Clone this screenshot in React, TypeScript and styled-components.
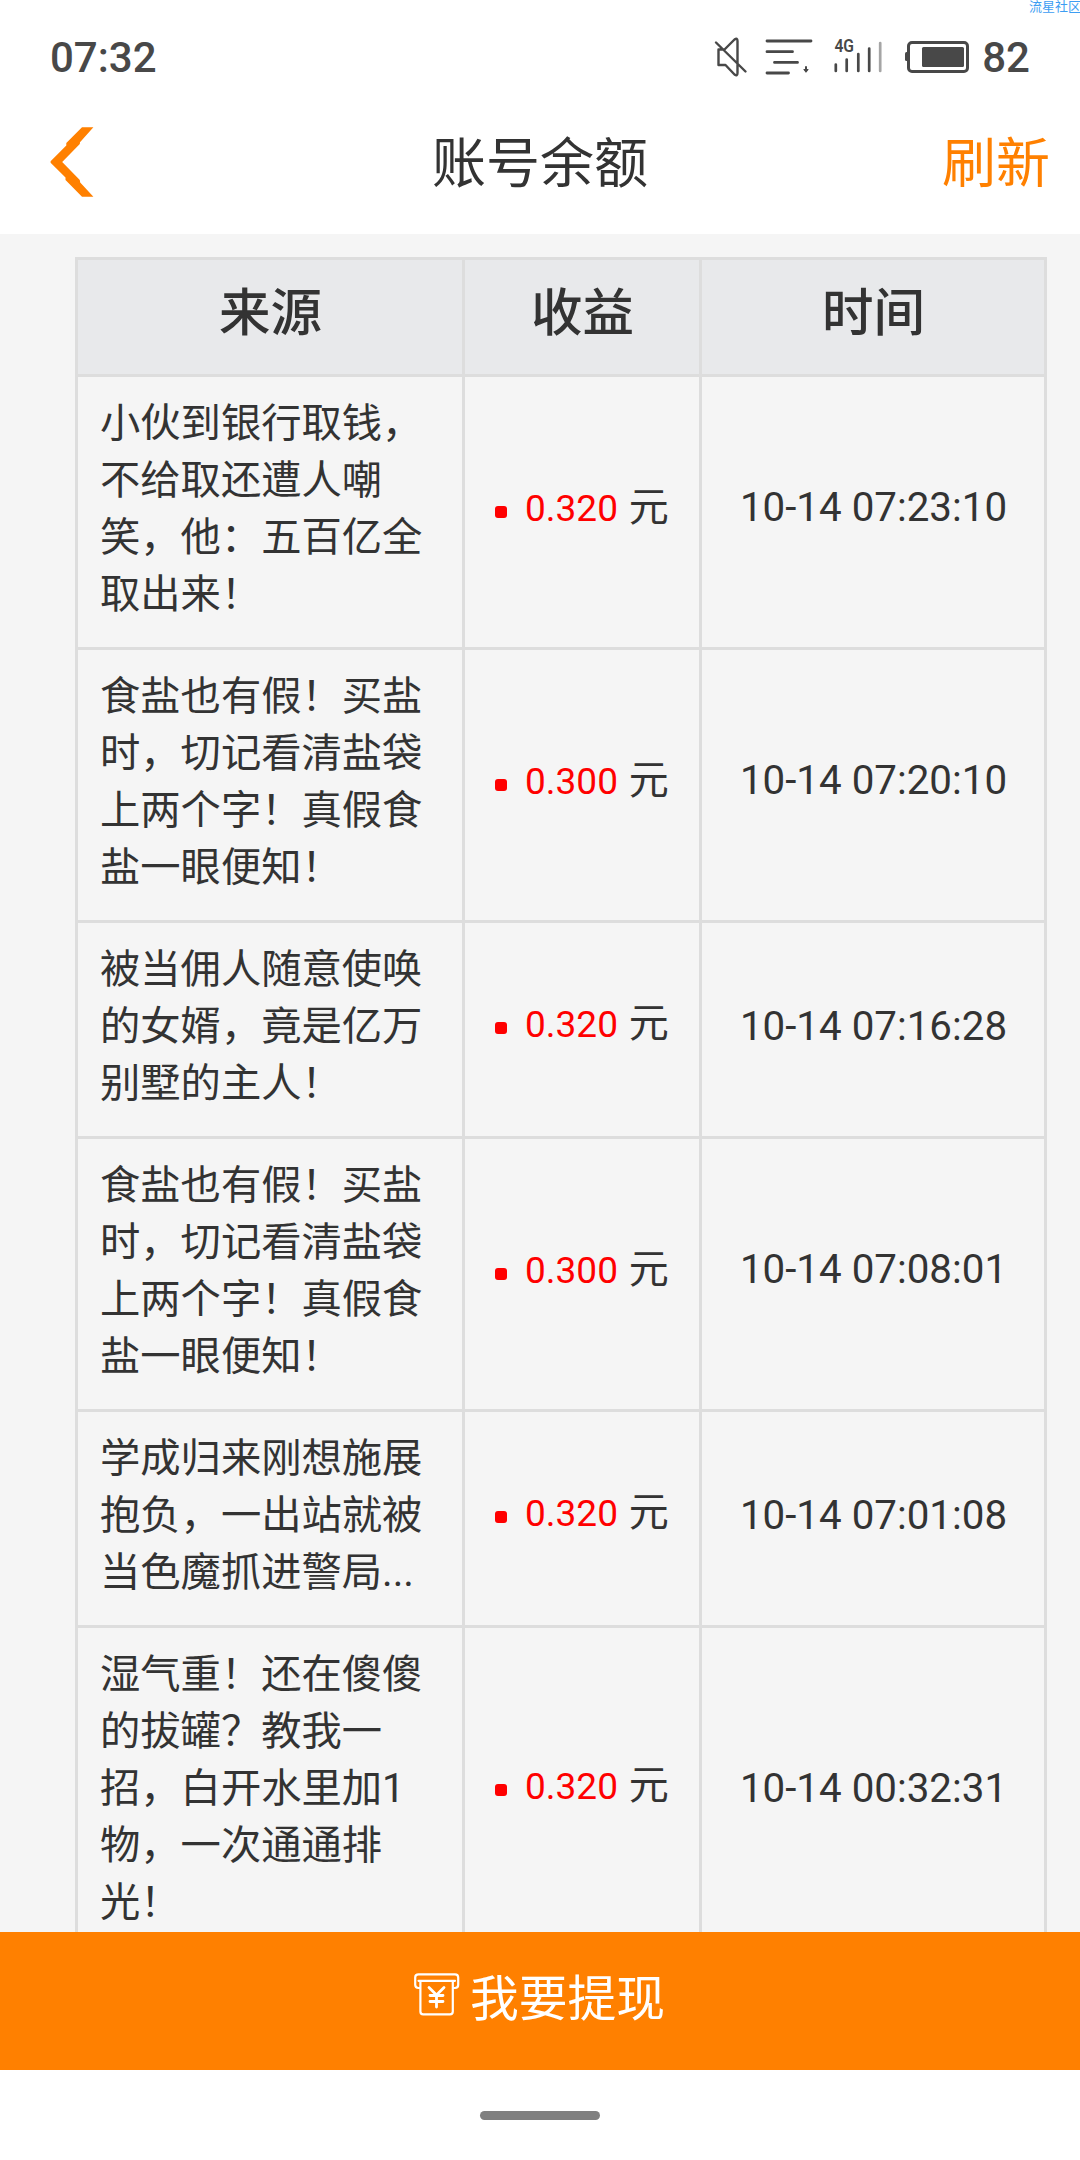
import React from "react";
import styled, { createGlobalStyle } from "styled-components";

const GlobalStyle = createGlobalStyle`
  * { box-sizing: border-box; }
  body {
    margin: 0;
    background: #ffffff;
    font-family: Roboto, "Noto Sans CJK SC", sans-serif;
    color: #333333;
  }
`;

const LINE = "#dddddd";
const ORANGE = "#ff8000";
const INK = "#484848";

const Screen = styled.div`
  position: relative;
  width: 1080px;
  height: 2160px;
  display: flex;
  flex-direction: column;
  overflow: hidden;
  background: #ffffff;
`;

const Watermark = styled.div`
  position: absolute;
  top: 0;
  right: -1px;
  font-size: 13px;
  line-height: 13px;
  color: #3d9df2;
`;

const StatusBar = styled.div`
  height: 108px;
  flex: none;
  display: flex;
  align-items: center;
  justify-content: space-between;
  padding: 6px 50px 0 50px;
  color: ${INK};
`;

const StatusText = styled.span`
  padding-top: 2px;
  font-size: 42px;
  font-weight: 500;
  line-height: 50px;
`;

const StatusGroup = styled.div`
  display: flex;
  align-items: center;
`;

const StatusIcons = styled.svg`
  display: block;
  margin-right: 12px;
`;

const NavBar = styled.header`
  height: 126px;
  flex: none;
  display: grid;
  grid-template-columns: 1fr auto 1fr;
  align-items: center;
  padding: 0 30px 18px 50px;
`;

const BackIcon = styled.svg`
  display: block;
`;

const Title = styled.h1`
  margin: 0;
  padding: 5px 20px 0 0;
  font-size: 54px;
  font-weight: 400;
  line-height: 72px;
`;

const Refresh = styled.button`
  justify-self: end;
  padding: 5px 0 0;
  border: 0;
  background: none;
  font: inherit;
  font-size: 54px;
  line-height: 72px;
  color: ${ORANGE};
`;

const Content = styled.main`
  flex: 1;
  min-height: 0;
  overflow: hidden;
  padding: 23px 33px 0 75px;
  background: #f5f5f5;
`;

const Table = styled.div`
  border: 3px solid ${LINE};
  border-bottom: 0;
`;

const Row = styled.div`
  display: grid;
  grid-template-columns: 387px 237px 342px;
  border-bottom: 3px solid ${LINE};
`;

const HeadRow = styled(Row)`
  background: #e8e9eb;
`;

const Cell = styled.div`
  display: flex;
  align-items: center;
  justify-content: center;
  border-right: 3px solid ${LINE};
  &:last-child { border-right: 0; }
`;

const HeadCell = styled(Cell)`
  height: 114px;
  padding: 0 0 6px 1px;
  font-size: 51.5px;
  font-weight: 500;
  line-height: 72px;
`;

const SourceCell = styled(Cell)`
  justify-content: flex-start;
  padding: 18px 21px 24px 22px;
  font-size: 40.3px;
  line-height: 57px;
  white-space: pre;
`;

const IncomeCell = styled(Cell)`
  justify-content: flex-start;
  padding-left: 30px;
`;

const Dot = styled.i<{ $odd: boolean }>`
  width: 12px;
  height: 12px;
  margin-right: 18px;
  margin-bottom: ${(p) => (p.$odd ? 3 : 0)}px;
  border-radius: 3px;
  background: #ff0000;
`;

const Income = styled.span<{ $odd: boolean }>`
  padding-bottom: ${(p) => (p.$odd ? 11 : 8)}px;
  font-size: 40px;
  line-height: 57px;
  white-space: pre;
`;

const Amount = styled.b`
  margin-right: 1px;
  font-size: 37px;
  font-weight: 400;
  color: #ff0000;
`;

const TimeCell = styled(Cell)<{ $odd: boolean }>`
  padding-left: 1px;
  padding-bottom: ${(p) => (p.$odd ? 7 : 9)}px;
  font-size: 40.3px;
  line-height: 57px;
`;

const Withdraw = styled.button`
  height: 138px;
  flex: none;
  display: flex;
  align-items: center;
  justify-content: center;
  gap: 10px;
  padding: 0 1px 2px 0;
  border: 0;
  background: ${ORANGE};
  color: #ffffff;
  font: inherit;
  font-size: 48.8px;
  line-height: 72px;
`;

const WithdrawGlyph = styled.svg`
  display: block;
  margin-bottom: 11px;
`;

const GestureBar = styled.div`
  height: 90px;
  flex: none;
  display: flex;
  justify-content: center;
  padding-top: 41px;
`;

const Handle = styled.div`
  width: 120px;
  height: 9px;
  border-radius: 5px;
  background: #808080;
`;

type Entry = { source: string; amount: string; time: string };

const entries: Entry[] = [
  { source: "小伙到银行取钱，\n不给取还遭人嘲\n笑，他：五百亿全\n取出来！", amount: "0.320", time: "10-14 07:23:10" },
  { source: "食盐也有假！买盐\n时，切记看清盐袋\n上两个字！真假食\n盐一眼便知！", amount: "0.300", time: "10-14 07:20:10" },
  { source: "被当佣人随意使唤\n的女婿，竟是亿万\n别墅的主人！", amount: "0.320", time: "10-14 07:16:28" },
  { source: "食盐也有假！买盐\n时，切记看清盐袋\n上两个字！真假食\n盐一眼便知！", amount: "0.300", time: "10-14 07:08:01" },
  { source: "学成归来刚想施展\n抱负，一出站就被\n当色魔抓进警局...", amount: "0.320", time: "10-14 07:01:08" },
  { source: "湿气重！还在傻傻\n的拔罐？教我一\n招，白开水里加1\n物，一次通通排\n光！", amount: "0.320", time: "10-14 00:32:31" },
];

const NetworkLabel = styled.text`
  font-family: Roboto, sans-serif;
  font-size: 17px;
  font-weight: 600;
`;

function SystemIcons() {
  return (
    <StatusIcons width="258" height="42" viewBox="712 36 258 42" fill="none" stroke={INK} strokeLinecap="round" strokeLinejoin="round">
      <path d="M724.5 49.5H718.5V65H725.5L734.5 74.5Q737.5 76.5 737.5 73V41Q737.5 37.5 734.5 39.5L724.5 49.5M716 42.5L745.5 71.5" strokeWidth="2.4" />
      <path d="M767 41H811M767 51.7H792.5M774.5 62.4H797.5M767 73H788.5" strokeWidth="2.8" />
      <path d="M806 67V70" strokeWidth="2" />
      <path d="M804 69.5H808L806 72Z" fill={INK} strokeWidth="1.2" />
      <path d="M835.8 64.5V71M846.7 59.5V71M858.3 54V71M869.2 48.5V71" strokeWidth="2.7" />
      <path d="M880.2 43V71" stroke="#a5a5a5" strokeWidth="2.7" />
      <NetworkLabel transform="translate(834.4 52.4) scale(0.92 1.04)" fill={INK} stroke="none">4G</NetworkLabel>
      <rect x="908.5" y="42.5" width="59" height="29" rx="3.5" strokeWidth="3" />
      <rect x="922" y="47" width="42" height="20" rx="1.5" fill={INK} stroke="none" />
      <path d="M908 52H906.5Q905 52 905 53.5V59.5Q905 61 906.5 61H908Z" fill={INK} stroke="none" />
    </StatusIcons>
  );
}

function WithdrawIcon() {
  return (
    <WithdrawGlyph width="46" height="43" viewBox="0 0 46 43" fill="none" stroke="#fff" strokeWidth="2.2" strokeLinecap="round" strokeLinejoin="round">
      <path d="M6 15H4.5Q1.2 15 1.2 11.8V4.5Q1.2 1.3 4.5 1.3H41Q44.2 1.3 44.2 4.5V11.8Q44.2 15 41 15H39.5" />
      <path d="M4.5 7.8H41" />
      <path d="M6.4 8V38.5Q6.4 41.3 9.2 41.3H36Q38.8 41.3 38.8 38.5V8" />
      <path d="M15 14.5L22.5 22L30 14.5M16 22.5H29M16 28.5H29M22.5 22V34" strokeWidth="2.8" />
    </WithdrawGlyph>
  );
}

export default function App() {
  return (
    <>
      <GlobalStyle />
      <Screen>
        <Watermark>流星社区</Watermark>
        <StatusBar>
          <StatusText>07:32</StatusText>
          <StatusGroup>
            <SystemIcons />
            <StatusText>82</StatusText>
          </StatusGroup>
        </StatusBar>
        <NavBar>
          <BackIcon width="44" height="70" viewBox="50 127 44 70">
            <path d="M82 127.3H93.4L80 142.2L79.8 144L62.2 162L79.8 180L80.2 182.5L93.4 196.7H82L65.5 180V177.5L50.6 162.8V161.2L66.3 145.5V143Z" fill={ORANGE} />
          </BackIcon>
          <Title>账号余额</Title>
          <Refresh>刷新</Refresh>
        </NavBar>
        <Content>
          <Table>
            <HeadRow>
              <HeadCell>来源</HeadCell>
              <HeadCell>收益</HeadCell>
              <HeadCell>时间</HeadCell>
            </HeadRow>
            {entries.map((e, i) => {
              const odd = e.source.split("\n").length % 2 === 1;
              return (
                <Row key={i}>
                  <SourceCell>{e.source}</SourceCell>
                  <IncomeCell>
                    <Dot $odd={odd} />
                    <Income $odd={odd}><Amount>{e.amount}</Amount> 元</Income>
                  </IncomeCell>
                  <TimeCell $odd={odd}>{e.time}</TimeCell>
                </Row>
              );
            })}
          </Table>
        </Content>
        <Withdraw>
          <WithdrawIcon />
          我要提现
        </Withdraw>
        <GestureBar><Handle /></GestureBar>
      </Screen>
    </>
  );
}
